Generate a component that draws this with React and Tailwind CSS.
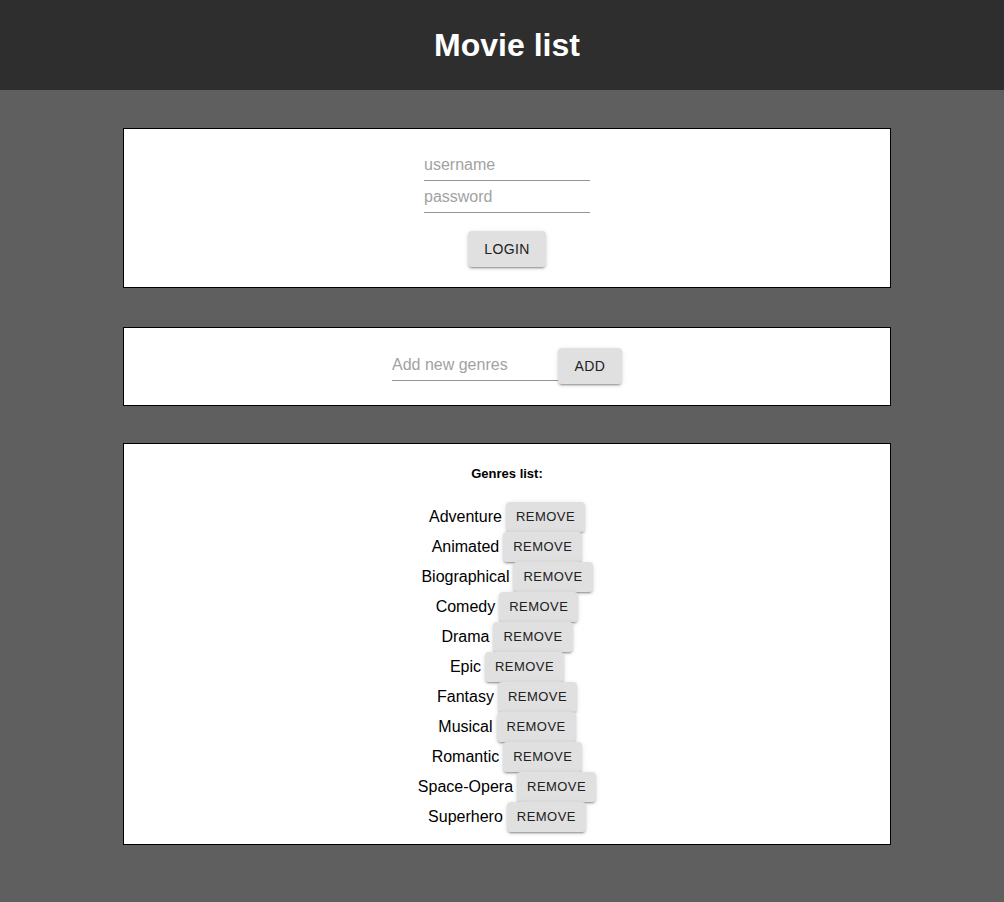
import React, { useState } from 'react';

const genres = [
  'Adventure',
  'Animated',
  'Biographical',
  'Comedy',
  'Drama',
  'Epic',
  'Fantasy',
  'Musical',
  'Romantic',
  'Space-Opera',
  'Superhero',
];

function TextField({ placeholder, value, onChange, type = 'text', tall }) {
  return (
    <div className={`w-[166px] ${tall ? 'h-[33px]' : 'h-8'} border-b border-[#949494] flex items-end`}>
      <input
        type={type}
        value={value}
        onChange={(e) => onChange(e.target.value)}
        placeholder={placeholder}
        className="w-full h-[30px] pb-[1px] text-[16px] text-black placeholder:text-[#a2a2a2] bg-transparent outline-none"
      />
    </div>
  );
}

function Button({ children, small, onClick }) {
  return (
    <button
      onClick={onClick}
      className={`${small ? 'h-[30px] px-[10px] text-[13px] tracking-[0.46px]' : 'h-9 px-4 text-[14px] tracking-[0.4px]'} min-w-16 rounded bg-[#e0e0e0] text-[#212121] uppercase shadow-[0_3px_1px_-2px_rgba(0,0,0,0.2),0_2px_2px_0_rgba(0,0,0,0.14),0_1px_5px_0_rgba(0,0,0,0.12)]`}
    >
      {children}
    </button>
  );
}

export default function App() {
  const [username, setUsername] = useState('');
  const [password, setPassword] = useState('');
  const [newGenre, setNewGenre] = useState('');
  const [list, setList] = useState(genres);

  const addGenre = () => {
    if (!newGenre.trim()) return;
    setList((prev) => [...prev, newGenre.trim()]);
    setNewGenre('');
  };

  return (
    <div className="min-h-[902px] bg-[#5f5f5f] font-['Liberation_Sans',Arial,sans-serif]">
      <header className="h-[90px] bg-[#2e2e2e] flex items-center justify-center pl-[10px]">
        <h1 className="text-[32px] font-bold text-white leading-none">Movie list</h1>
      </header>

      <div className="pl-[10px] pt-[38px] pb-[57px] flex flex-col items-center">
        {/* login */}
        <div className="w-[768px] h-[160px] bg-white border border-black pt-[20px] flex flex-col items-center">
          <TextField placeholder="username" value={username} onChange={setUsername} />
          <TextField placeholder="password" type="password" value={password} onChange={setPassword} />
          <div className="mt-[18px]">
            <Button>Login</Button>
          </div>
        </div>

        {/* add genre */}
        <div className="mt-[39px] w-[768px] h-[79px] bg-white border border-black pt-[20px] flex justify-center items-start">
          <TextField tall placeholder="Add new genres" value={newGenre} onChange={setNewGenre} />
          <Button onClick={addGenre}>Add</Button>
        </div>

        {/* genres list */}
        <div className="mt-[37px] w-[768px] bg-white border border-black pt-[22px] pb-[12px] flex flex-col items-center">
          <h4 className="text-[13px] font-bold text-black leading-[15px] mb-[21px]">Genres list:</h4>
          {list.map((g) => (
            <div key={g} className="h-[30px] flex items-center gap-1 text-[16px] text-black">
              <span>{g}</span>
              <Button small onClick={() => setList((prev) => prev.filter((x) => x !== g))}>
                Remove
              </Button>
            </div>
          ))}
        </div>
      </div>
    </div>
  );
}
